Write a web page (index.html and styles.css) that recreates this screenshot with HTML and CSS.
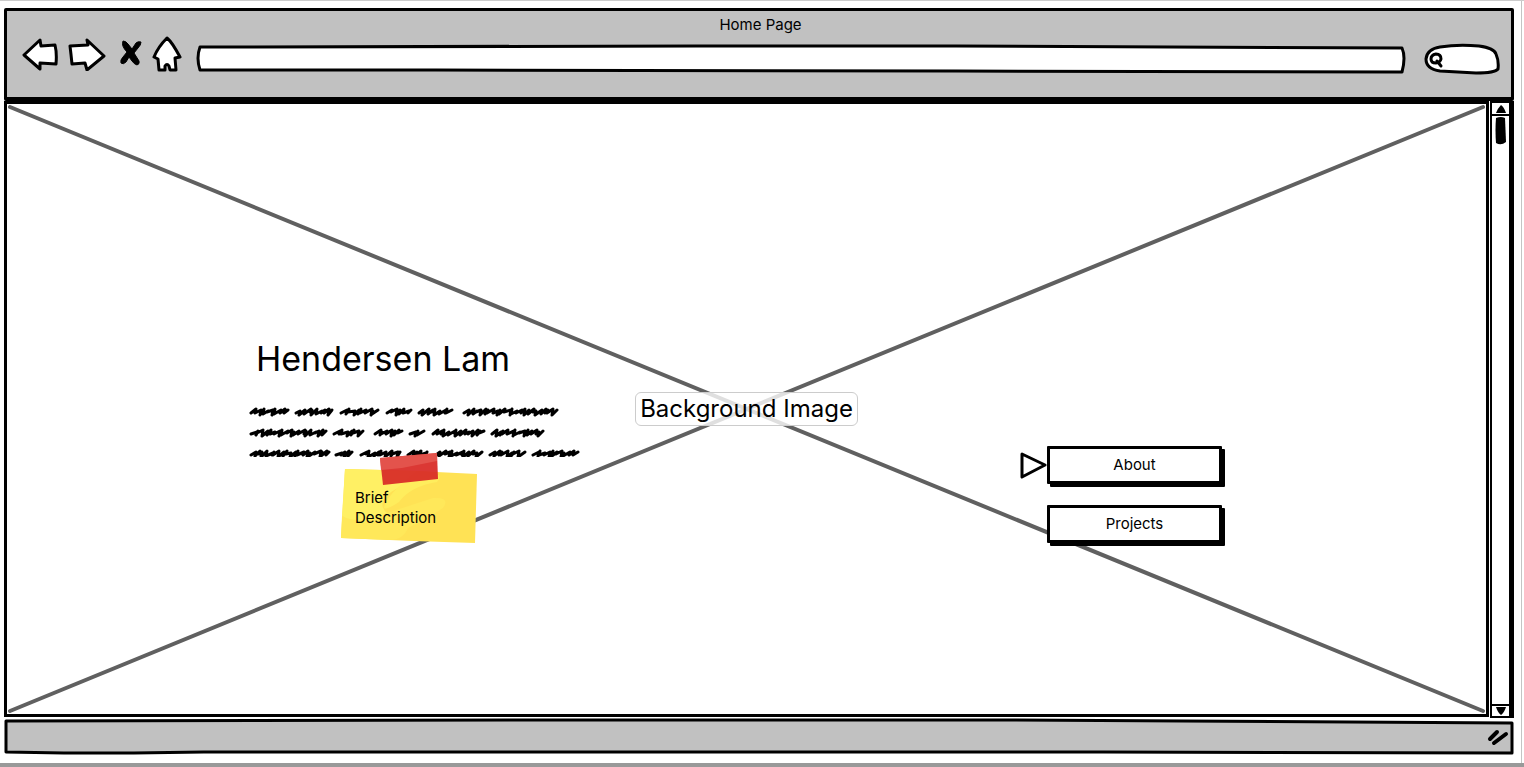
FILE: index.html
```html
<!DOCTYPE html>
<html lang="en">
<head>
<meta charset="utf-8">
<title>Home Page</title>
<link rel="stylesheet" href="styles.css">
</head>
<body>
<div class="canvas">
  <div class="window">
    <header class="chrome">
      <div class="window-title">Home Page</div>
      <div class="toolbar">
        <button class="tool back" aria-label="Back">
          <svg width="36" height="34" viewBox="0 0 36 34"><path d="M2 18L18 3L19 9L33 8Q35 16 34 27L18 26L18 32Z"/></svg>
        </button>
        <button class="tool forward" aria-label="Forward">
          <svg width="38" height="34" viewBox="0 0 38 34"><path d="M2 9L20 8L19 3L36 19L19 33L17 26L4 27Q3 17 2 9Z"/></svg>
        </button>
        <button class="tool stop" aria-label="Stop">
          <svg width="22" height="26" viewBox="0 0 22 26"><path class="ink" d="M3 1Q6 1 8 4L12 9L16 3Q18 1 21 2Q21 5 18 8L14 13L19 21Q20 24 17 25Q14 24 12 21L9 17L6 22Q3 25 1 23Q0 20 3 17L7 12Q1 6 3 1Z"/></svg>
        </button>
        <button class="tool home" aria-label="Home">
          <svg width="30" height="36" viewBox="0 0 30 36"><path d="M15 2Q20 6 28 21L23 22L24 34L18 34L17 30Q15 27 13 30L13 34L7 34L6 23L2 21Q6 11 15 2Z"/></svg>
        </button>
        <div class="field address">
          <svg class="sketch" viewBox="0 0 1210 30" preserveAspectRatio="none" aria-hidden="true"><path d="M4 3L500 2L760 2L1206 4Q1210 13 1206 28L760 27L240 26L4 26Q0 14 4 3Z"/></svg>
          <input type="text" aria-label="Address">
        </div>
        <div class="field search">
          <svg class="sketch" viewBox="0 0 76 32" preserveAspectRatio="none" aria-hidden="true"><path d="M16 4Q34 1 55 3Q70 5 72 11Q75 18 74 26Q71 30 52 30L16 28Q2 26 2 16Q3 6 16 4Z"/></svg>
          <svg class="lens" width="16" height="18" viewBox="0 0 16 18" aria-hidden="true"><path d="M8 2Q13 2 13 7Q12 11 8 11Q3 11 3 7Q3 3 8 2ZM9 9L13 14"/></svg>
          <input type="search" aria-label="Search">
        </div>
      </div>
    </header>

    <div class="viewport">
      <main class="stage">
        <svg class="cross" viewBox="0 0 1480 610" preserveAspectRatio="none" aria-hidden="true"><path d="M3 3L1477 607M1477 3L3 607"/></svg>
        <section class="intro">
          <h1>Hendersen Lam</h1>
          <svg class="scribbles" width="332" height="56" viewBox="0 0 332 56" role="img" aria-label="Placeholder paragraph"></svg>
          <aside class="note">
            <svg class="paper" viewBox="0 0 136 76" preserveAspectRatio="none" aria-hidden="true">
              <path fill="#ffe255" d="M4 1Q70 2 136 6L134 75Q66 73 0 70Z"/>
              <path fill="#fff064" d="M4 1L76 3Q70 13 50 24Q35 36 46 45L29 56Q15 58 1 48Z"/>
              <path fill="#ffed5d" d="M76 3Q106 3 96 14Q70 18 58 34Q46 42 43 40Q45 27 76 3Z"/>
              <path fill="#ffe85a" d="M46 45L92 30Q110 29 102 40Q82 53 67 60Q62 72 49 72L0 70L1 48Q21 58 46 45Z"/>
            </svg>
            <svg class="tape" width="59" height="32" viewBox="0 0 59 32" aria-hidden="true">
              <path fill="#d92c27" fill-opacity=".94" d="M0 5L57 0L58 26L3 32Z"/>
              <path fill="#e3564f" fill-opacity=".9" d="M0 5L57 0L57 8L22 15L1 17Z"/>
            </svg>
            <p>Brief<br>Description</p>
          </aside>
        </section>
        <div class="image-label">Background Image</div>
        <nav class="menu">
          <div class="menu-row">
            <svg class="pointer" width="27" height="28" viewBox="0 0 27 28" aria-hidden="true"><path d="M2 3L25 14L2 26Z"/></svg>
            <button class="menu-button">About</button>
          </div>
          <div class="menu-row"><button class="menu-button">Projects</button></div>
        </nav>
      </main>
      <div class="scrollbar">
        <button class="scroll-up" aria-label="Scroll up"><svg width="10" height="8" viewBox="0 0 10 8"><path d="M5 0Q8 2 10 8L0 8Q2 3 5 0Z"/></svg></button>
        <div class="track"><svg width="11" height="29" viewBox="0 0 11 29"><path d="M1 2Q6 0 10 2L11 26Q6 30 1 27Q0 14 1 2Z"/></svg></div>
        <button class="scroll-down" aria-label="Scroll down"><svg width="10" height="8" viewBox="0 0 10 8"><path d="M0 0L10 0Q8 6 5 8Q2 6 0 0Z"/></svg></button>
      </div>
    </div>

    <footer class="statusbar">
      <svg class="sketch" viewBox="0 0 1511 37" preserveAspectRatio="none" aria-hidden="true"><path d="M2 3L540 2L1000 2L1180 3L1509 5L1509 35L1100 34L420 34L200 34L130 35L60 35L2 34Z"/></svg>
      <svg class="grip" width="22" height="20" viewBox="0 0 22 20" aria-hidden="true"><path d="M3 12L10 5M7 16L19 7"/></svg>
    </footer>
  </div>
</div>
<script src="scribbles.js"></script>
</body>
</html>
```
FILE: styles.css
```css
* { box-sizing: border-box; }

body {
  margin: 0;
  background: #fff;
  color: #000;
  font-family: Inter, "Liberation Sans", sans-serif;
  font-size: 15px;
  line-height: 20px;
}

button, input {
  font: inherit;
  color: inherit;
  padding: 0;
  border: 0;
  background: none;
}

svg { display: block; }

.canvas {
  display: flex;
  min-height: 100vh;
  padding: 7px 10px 8px 4px;
  border-top: 1px solid #ccc;
  border-bottom: 4px solid #999;
  box-shadow: inset -2px 0 #fff, inset -3px 0 #c4c4c4;
}

.window {
  flex: 1;
  display: flex;
  flex-direction: column;
}

.chrome {
  height: 93px;
  padding: 4px 11px 0 14px;
  border: 3px solid #000;
  border-bottom-width: 4px;
  border-radius: 2px;
  background: #c1c1c1;
}

.window-title { text-align: center; }

.toolbar {
  display: flex;
  align-items: center;
  height: 48px;
}

.tool path, .sketch path {
  fill: #fff;
  stroke: #000;
  stroke-width: 3px;
  stroke-linejoin: round;
  vector-effect: non-scaling-stroke;
}

.tool .ink { fill: #000; stroke-width: 1px; }
.back { margin: 0 10px 10px 1px; }
.forward { margin: 0 14px 10px 0; }
.stop { margin: 0 10px 12px 0; }
.home { margin: 0 14px 10px 0; }

.field { position: relative; }
.address { flex: 1; height: 30px; margin-right: 18px; }
.search { width: 76px; height: 32px; }

.sketch {
  position: absolute;
  inset: 0;
  width: 100%;
  height: 100%;
}

.field input {
  position: relative;
  width: 100%;
  height: 100%;
  padding: 0 10px;
  outline: 0;
}

.search input { padding-left: 20px; }

.lens { position: absolute; left: 4px; top: 9px; }

.lens path, .pointer path {
  fill: none;
  stroke: #000;
  stroke-width: 3px;
  stroke-linejoin: round;
  stroke-linecap: round;
}

.viewport {
  flex: 1;
  display: flex;
  border-right: 3px solid #000;
}

.stage {
  position: relative;
  flex: 1;
  display: grid;
  grid-template-columns: 1fr auto 1fr;
  margin-bottom: 1px;
  border: 3px solid #000;
}

.cross {
  position: absolute;
  inset: 0;
  width: 100%;
  height: 100%;
}

.cross path {
  fill: none;
  stroke: #606060;
  stroke-width: 4px;
  stroke-linecap: round;
  vector-effect: non-scaling-stroke;
}

.intro {
  position: relative;
  padding: 233px 0 0 242px;
}

h1 {
  margin: 0 0 20px 7px;
  font-size: 34px;
  line-height: 44px;
  font-weight: 400;
  white-space: nowrap;
}

.scribbles path {
  fill: none;
  stroke: #000;
  stroke-width: 3px;
  stroke-linecap: round;
  stroke-linejoin: round;
}

.note {
  position: relative;
  width: 136px;
  height: 76px;
  margin: 11px 0 0 92px;
  padding: 20px 0 0 14px;
}

.note p { position: relative; margin: 0; }

.paper {
  position: absolute;
  inset: 0;
  width: 100%;
  height: 100%;
}

.tape { position: absolute; left: 39px; top: -15px; }

.image-label {
  position: relative;
  align-self: center;
  padding: 0 4px;
  border: 1px solid #ccc;
  border-radius: 6px;
  background: rgba(255, 255, 255, .8);
  font-size: 24px;
  line-height: 32px;
}

.menu {
  position: relative;
  display: flex;
  flex-direction: column;
  gap: 21px;
  padding: 342px 264px 0 0;
}

.menu-row {
  display: flex;
  justify-content: flex-end;
  align-items: center;
}

.menu-button {
  width: 175px;
  height: 38px;
  border: 3px solid #000;
  border-radius: 1px;
  background: #fff;
  box-shadow: 3px 3px #000;
}

.scrollbar {
  display: flex;
  flex-direction: column;
  width: 21px;
  margin-left: 1px;
  border: 2px solid #000;
}

.scroll-up, .scroll-down {
  display: flex;
  align-items: center;
  justify-content: center;
  height: 12px;
}

.scroll-up { border-bottom: 2px solid #000; height: 13px; }
.scroll-down { border-top: 2px solid #000; }

.track {
  flex: 1;
  display: flex;
  justify-content: center;
}

.statusbar {
  position: relative;
  display: flex;
  justify-content: flex-end;
  align-items: center;
  height: 37px;
  padding-right: 5px;
}

.statusbar .sketch path { fill: #c1c1c1; }
.grip { position: relative; }

.grip path {
  stroke: #000;
  stroke-width: 4px;
  stroke-linecap: round;
}
```
FILE: scribbles.js
```js
// Start and end of each placeholder word, line by line.
const lines = [
  [[1, 40], [46, 84], [91, 130], [137, 163], [169, 204], [214, 309]],
  [[1, 78], [84, 115], [125, 154], [160, 176], [183, 236], [242, 295]],
  [[1, 81], [86, 104], [111, 152], [158, 179], [186, 234], [240, 277], [283, 330]]
];
const svg = document.querySelector(".scribbles");
let step = 0;

lines.forEach((words, row) => {
  const base = 12 + row * 21;
  words.forEach(([start, end]) => {
    let x = start + 1;
    let d = `M${x} ${base}`;
    while (x < end - 7) {
      const rise = [4, 3, 4, 2, 3][step % 5];
      const drop = [0, 2, 1, -1, 2, 1, 0][step % 7];
      const slope = [5, 6, 4][step % 3];
      d += `L${x + slope} ${base - rise}L${x + slope - 1} ${base + drop}`;
      x += [4, 5, 3, 4][step % 4];
      step++;
    }
    d += `L${end - 1} ${base - 3}`;
    const path = document.createElementNS("http://www.w3.org/2000/svg", "path");
    path.setAttribute("d", d);
    svg.append(path);
  });
});
```
